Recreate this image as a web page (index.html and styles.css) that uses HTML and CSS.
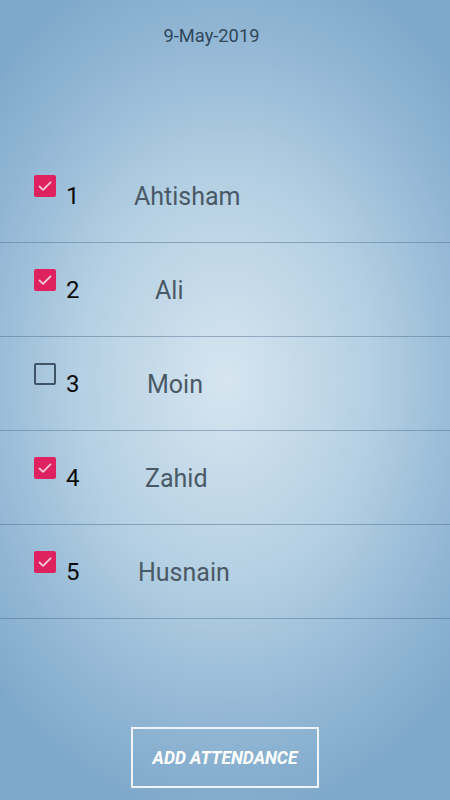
FILE: index.html
```html
<!DOCTYPE html>
<html>
<head>
<meta charset="utf-8">
<link rel="stylesheet" href="styles.css">
</head>
<body>
<div class="screen">
  <div class="date">9-May-2019</div>
  <ul class="list">
    <li class="row">
      <span class="box checked"><svg viewBox="0 0 22 22"><path d="M5.5 11.5l3.6 3.4 7.4-7.6" /></svg></span>
      <span class="num">1</span>
      <span class="name n1">Ahtisham</span>
    </li>
    <li class="row">
      <span class="box checked"><svg viewBox="0 0 22 22"><path d="M5.5 11.5l3.6 3.4 7.4-7.6" /></svg></span>
      <span class="num">2</span>
      <span class="name n2">Ali</span>
    </li>
    <li class="row">
      <span class="box"></span>
      <span class="num">3</span>
      <span class="name n3">Moin</span>
    </li>
    <li class="row">
      <span class="box checked"><svg viewBox="0 0 22 22"><path d="M5.5 11.5l3.6 3.4 7.4-7.6" /></svg></span>
      <span class="num">4</span>
      <span class="name n4">Zahid</span>
    </li>
    <li class="row">
      <span class="box checked"><svg viewBox="0 0 22 22"><path d="M5.5 11.5l3.6 3.4 7.4-7.6" /></svg></span>
      <span class="num">5</span>
      <span class="name n5">Husnain</span>
    </li>
  </ul>
  <div class="footer">
    <button class="add">ADD ATTENDANCE</button>
  </div>
</div>
</body>
</html>
```

FILE: styles.css
```css
html, body {
  margin: 0;
  padding: 0;
}
body {
  font-family: Roboto, "Noto Sans", sans-serif;
}
.screen {
  width: 450px;
  height: 800px;
  display: flex;
  flex-direction: column;
  background: radial-gradient(ellipse 320px 440px at 225px 380px, #d6e5f0 0%, #b5d0e3 45%, #95b9d6 75%, #7ea8ca 100%);
  overflow: hidden;
}
.date {
  text-align: center;
  padding-top: 25px;
  padding-right: 27px;
  height: 24px;
  font-size: 18.3px;
  color: #2e475c;
}
.list {
  list-style: none;
  margin: 100px 0 0 0;
  padding: 0;
}
.row {
  height: 93px;
  border-bottom: 1px solid rgba(70, 105, 135, 0.45);
  display: flex;
  align-items: flex-start;
  padding-left: 34px;
}
.box {
  width: 18px;
  height: 18px;
  border: 2px solid #3f5466;
  border-radius: 2px;
  margin-top: 26px;
  display: flex;
}
.box.checked {
  background: #e0215f;
  border-color: #e0215f;
}
.box svg {
  width: 22px;
  height: 22px;
  margin: -2px;
}
.box path {
  fill: none;
  stroke: #f3c9da;
  stroke-width: 1.8;
  stroke-linecap: round;
  stroke-linejoin: round;
}
.num {
  margin-left: 10px;
  margin-top: 34px;
  font-size: 24px;
  line-height: 27px;
  color: #0a0a0a;
  width: 20px;
}
.name {
  margin-top: 34px;
  font-size: 25px;
  line-height: 28px;
  color: #4a5966;
}
.n1 { margin-left: 48px; }
.n2 { margin-left: 69px; }
.n3 { margin-left: 61px; }
.n4 { margin-left: 59px; }
.n5 { margin-left: 52px; }
.footer {
  flex: 1;
  display: flex;
  justify-content: center;
  align-items: flex-end;
  padding-bottom: 12px;
}
.add {
  width: 188px;
  height: 61px;
  background: transparent;
  border: 2px solid #eef4f9;
  color: #ffffff;
  font-family: Roboto, sans-serif;
  font-weight: bold;
  font-style: italic;
  font-size: 17.4px;
  padding: 0;
}
```
